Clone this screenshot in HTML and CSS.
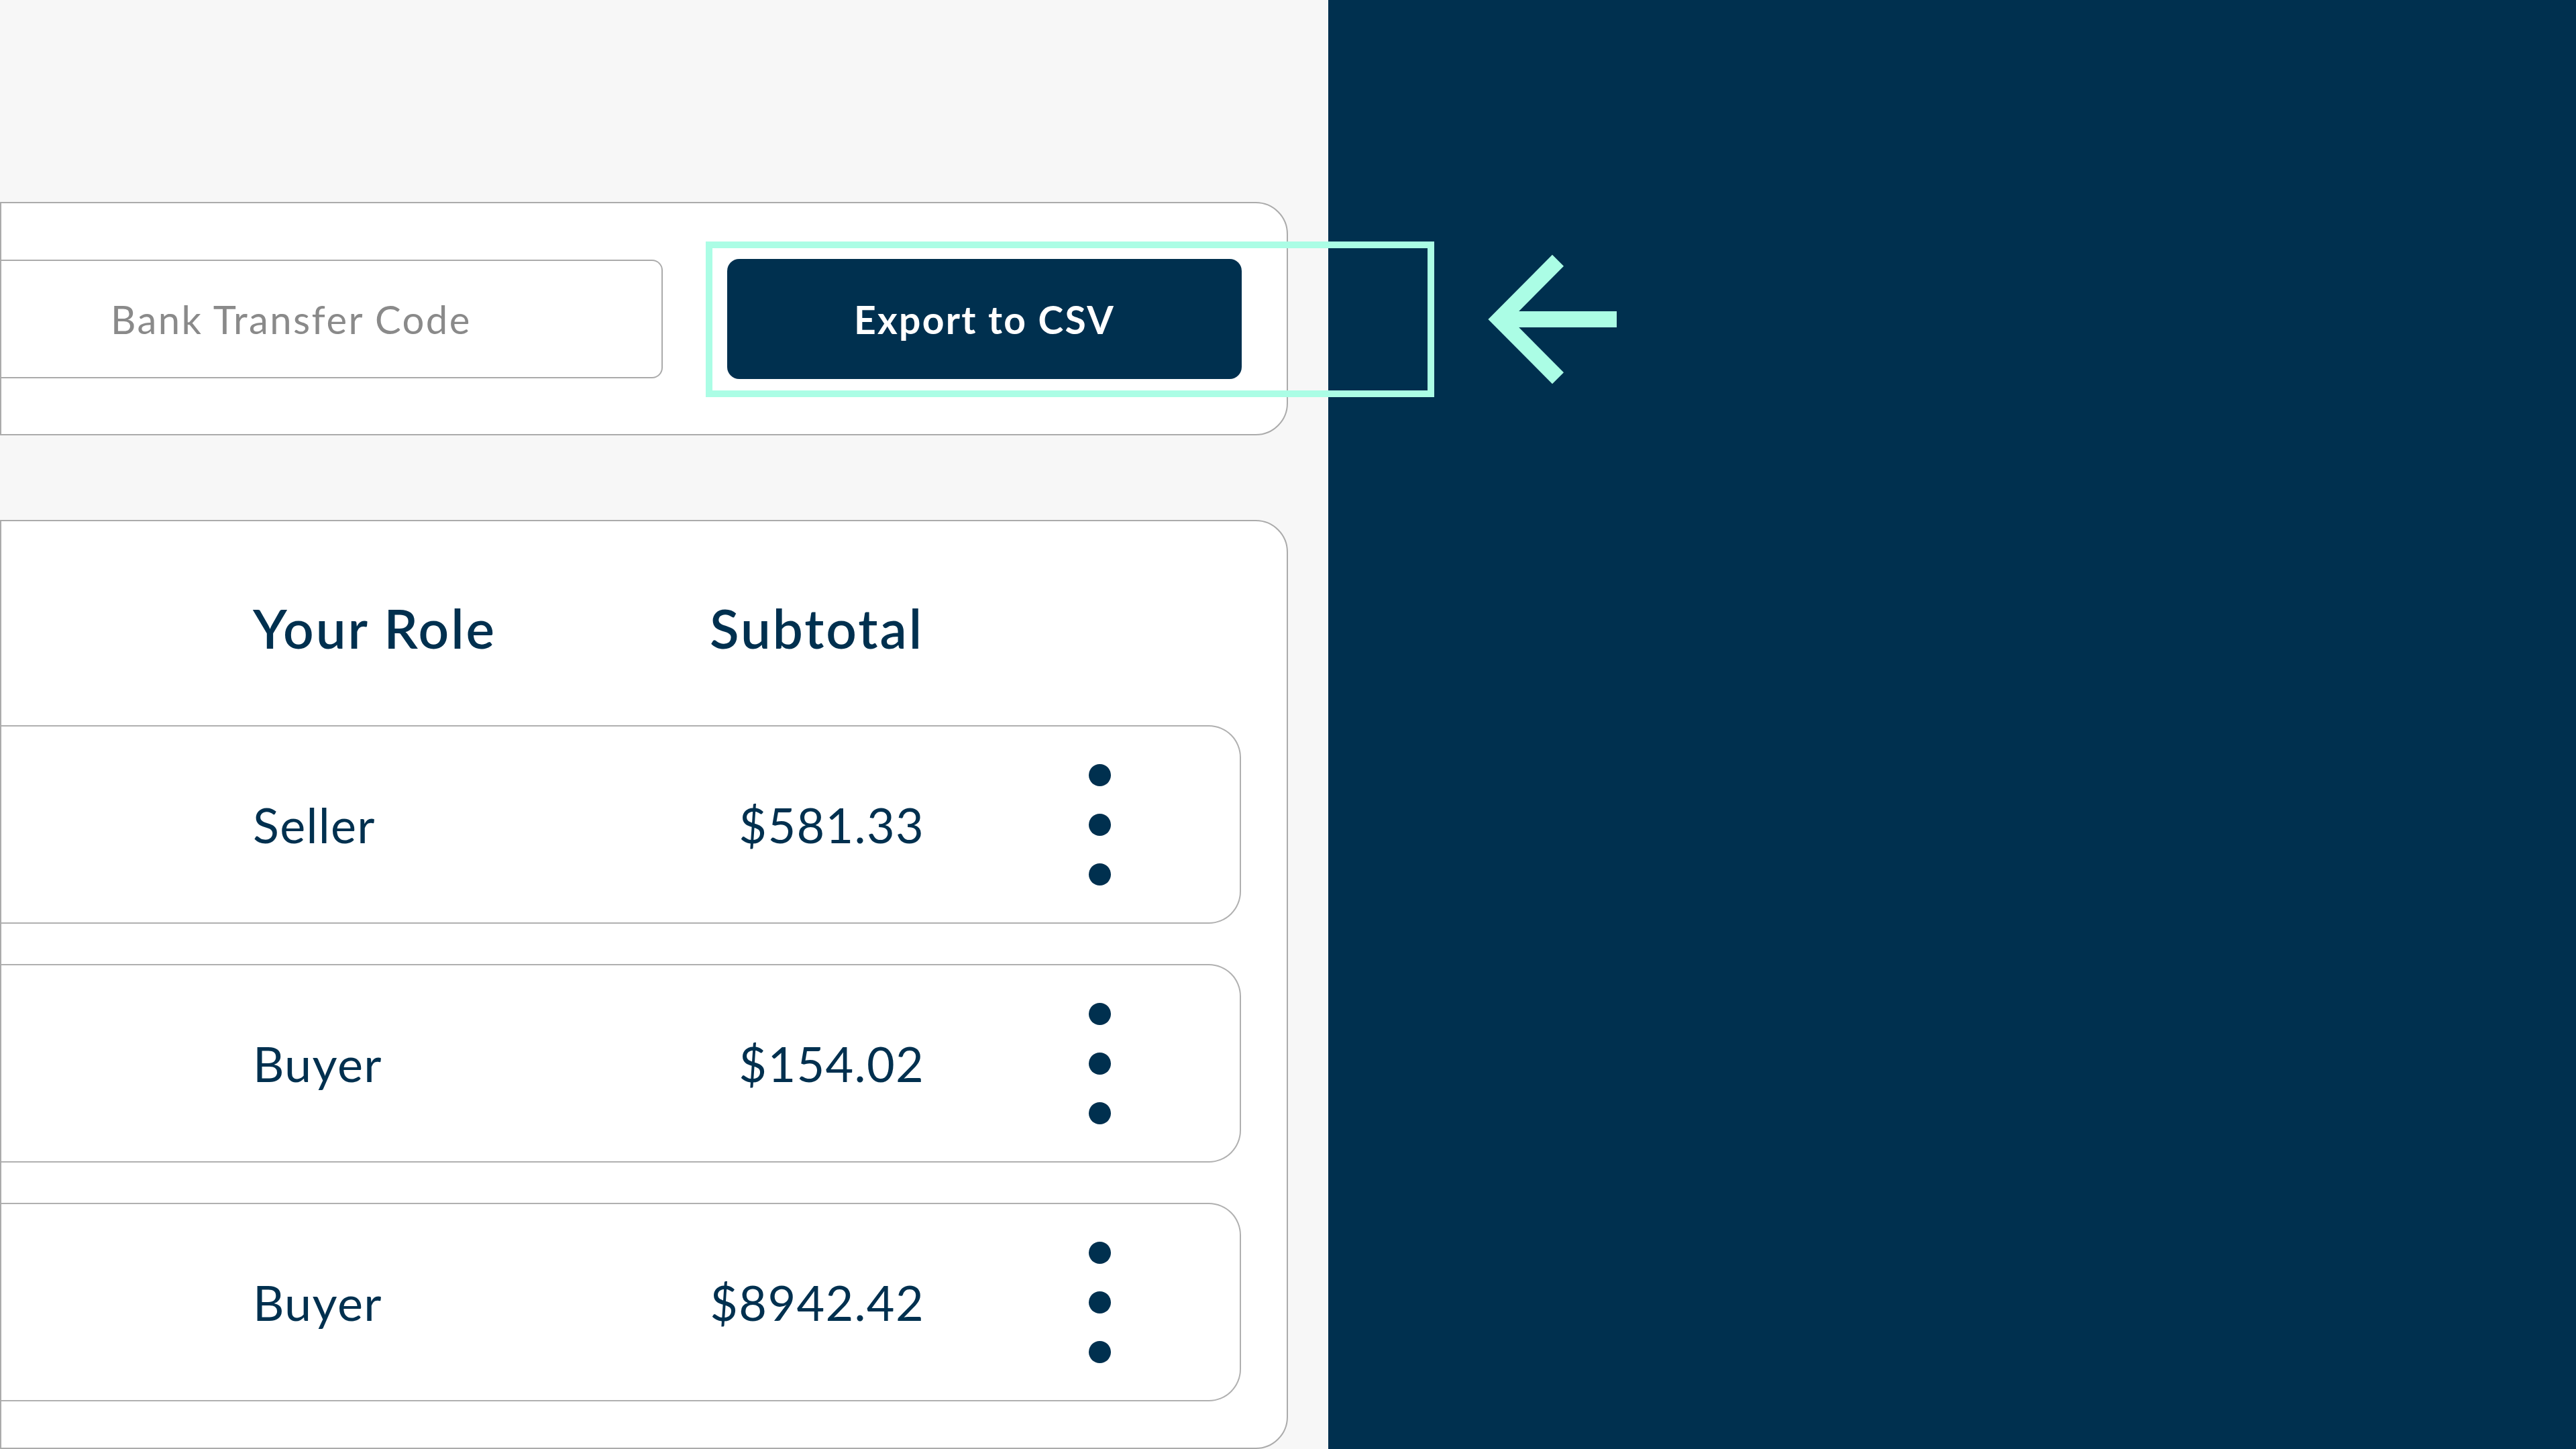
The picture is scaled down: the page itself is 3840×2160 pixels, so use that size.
FILE: index.html
```html
<!DOCTYPE html>
<html lang="en">
<head>
<meta charset="utf-8">
<title>Export to CSV</title>
<link rel="stylesheet" href="styles.css">
</head>
<body>
<div class="page">
  <main class="left">
    <section class="card filters">
      <div class="input">Bank Transfer Code</div>
      <button class="btn">Export to CSV</button>
    </section>
    <section class="card table">
      <div class="thead">
        <div class="th role">Your Role</div>
        <div class="th">Subtotal</div>
      </div>
      <div class="rows">
        <div class="row">
          <div class="cell role">Seller</div>
          <div class="cell amount">$581.33</div>
          <div class="dots"><span></span><span></span><span></span></div>
        </div>
        <div class="row">
          <div class="cell role">Buyer</div>
          <div class="cell amount">$154.02</div>
          <div class="dots"><span></span><span></span><span></span></div>
        </div>
        <div class="row">
          <div class="cell role">Buyer</div>
          <div class="cell amount">$8942.42</div>
          <div class="dots"><span></span><span></span><span></span></div>
        </div>
      </div>
    </section>
  </main>
  <aside class="right"></aside>
  <div class="highlight"></div>
  <svg class="arrow" width="230" height="210" viewBox="0 0 230 210">
    <path d="M210 106 H35.3 M122.5 18.3 L35.3 106 L122.5 193.7" fill="none" stroke="#abfde5" stroke-width="24" stroke-linejoin="miter" stroke-miterlimit="4" stroke-linecap="butt"/>
  </svg>
</div>
</body>
</html>
```
FILE: styles.css
```css
* { box-sizing: border-box; }
html, body { margin: 0; padding: 0; }
body {
  width: 3840px;
  height: 2160px;
  overflow: hidden;
  font-family: "Lato", "Noto Sans", sans-serif;
  color: #00304f;
}
.page {
  position: relative;
  display: flex;
  width: 3840px;
  height: 2160px;
}
.left {
  width: 1980px;
  background: #f7f7f7;
  padding-top: 301px;
  display: flex;
  flex-direction: column;
  gap: 126px;
}
.right {
  flex: 1;
  background: #00304f;
}
.card {
  width: 1920px;
  background: #fff;
  border: 2px solid #ababab;
  border-radius: 0 48px 48px 0;
}
.filters {
  display: flex;
  align-items: center;
  padding: 83px 67px 82px 0;
}
.input {
  width: 986px;
  height: 177px;
  border: 2px solid #ababab;
  border-left: none;
  border-radius: 0 16px 16px 0;
  display: flex;
  align-items: center;
  padding-left: 163px;
  font-size: 58px;
  letter-spacing: 2.4px;
  color: #8a8a8a;
}
.btn {
  margin-left: 96px;
  width: 767px;
  height: 179px;
  border: none;
  border-radius: 18px;
  background: #00304f;
  color: #fff;
  font-family: "Lato", "Noto Sans", sans-serif;
  font-size: 57px;
  font-weight: 700;
  letter-spacing: 2.3px;
  padding: 0;
}
.table {
  flex: 1;
  padding: 0 68px 68px 0;
}
.thead {
  display: flex;
  height: 304px;
  padding: 111px 0 0 375px;
  font-size: 80px;
  font-weight: 600;
  line-height: 1.2;
  letter-spacing: 3px;
}
.th.role { width: 681px; }
.rows {
  display: flex;
  flex-direction: column;
  gap: 60px;
}
.row {
  width: 1848px;
  height: 296px;
  border: 2px solid #b0b0b0;
  border-left: none;
  border-radius: 0 48px 48px 0;
  display: flex;
  align-items: center;
  padding-left: 375px;
  font-size: 72px;
  line-height: 1.2;
  letter-spacing: 1.3px;
}
.cell.role { width: 500px; }
.cell.amount { width: 501px; text-align: right; }
.dots {
  margin-left: 245px;
  display: flex;
  flex-direction: column;
  gap: 41px;
}
.dots span {
  width: 33px;
  height: 33px;
  border-radius: 50%;
  background: #00304f;
}
.highlight {
  position: absolute;
  left: 1052px;
  top: 360px;
  width: 1086px;
  height: 232px;
  border: 10px solid #abfde5;
}
.arrow {
  position: absolute;
  left: 2200px;
  top: 370px;
}
```
